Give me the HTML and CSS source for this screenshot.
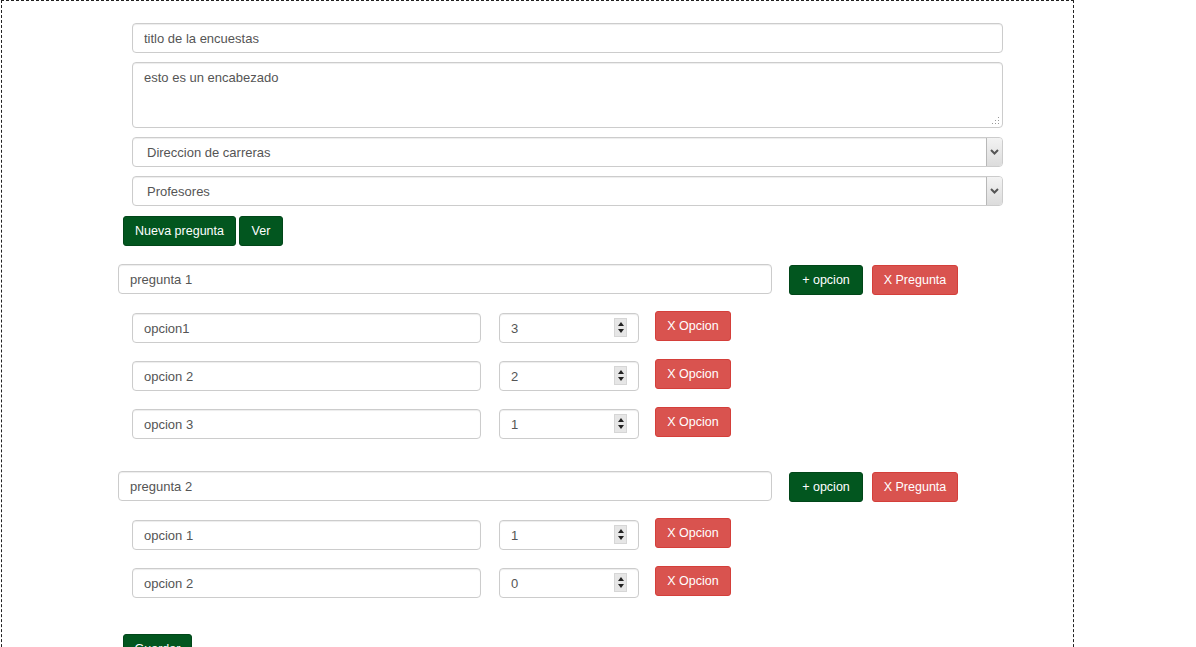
FILE: index.html
```html
<!DOCTYPE html>
<html lang="es">
<head>
    <meta charset="UTF-8">
    <meta name="viewport" content="width=device-width, initial-scale=1.0">
    <title>Encuesta</title>
    <link rel="stylesheet" href="styles.css">
</head>
<body>
    <div class="canvas">
        <form class="survey" onsubmit="return false">
            <div class="head-fields">
                <input class="field" type="text" value="titlo de la encuestas">

                <div class="area-wrap">
                    <textarea class="field area">esto es un encabezado</textarea>
                    <svg class="grip" width="9" height="9" viewBox="0 0 9 9">
                        <rect x="7" y="1" width="1" height="1"/>
                        <rect x="4" y="4" width="1" height="1"/><rect x="7" y="4" width="1" height="1"/>
                        <rect x="1" y="7" width="1" height="1"/><rect x="4" y="7" width="1" height="1"/><rect x="7" y="7" width="1" height="1"/>
                    </svg>
                </div>

                <div class="select-wrap">
                    <select class="field select">
                        <option>Direccion de carreras</option>
                    </select>
                    <span class="select-btn">
                        <svg width="9" height="6" viewBox="0 0 9 6"><path d="M1 1 L4.5 4.5 L8 1" fill="none" stroke="#555" stroke-width="2"/></svg>
                    </span>
                </div>

                <div class="select-wrap">
                    <select class="field select">
                        <option>Profesores</option>
                    </select>
                    <span class="select-btn">
                        <svg width="9" height="6" viewBox="0 0 9 6"><path d="M1 1 L4.5 4.5 L8 1" fill="none" stroke="#555" stroke-width="2"/></svg>
                    </span>
                </div>
            </div>

            <div class="toolbar">
                <button class="btn btn-green btn-new" type="button">Nueva pregunta</button>
                <button class="btn btn-green btn-ver" type="button">Ver</button>
            </div>

            <!-- pregunta 1 -->
            <div class="question">
                <div class="question-row">
                    <input class="field question-input" type="text" value="pregunta 1">
                    <button class="btn btn-green btn-add" type="button">+ opcion</button>
                    <button class="btn btn-red btn-del-q" type="button">X Pregunta</button>
                </div>
                <div class="options">
                    <div class="option-row">
                        <input class="field option-input" type="text" value="opcion1">
                        <div class="num-wrap">
                            <input class="field num" type="number" value="3">
                            <span class="spin"><i class="up"></i><i class="down"></i></span>
                        </div>
                        <button class="btn btn-red btn-del-o" type="button">X Opcion</button>
                    </div>
                    <div class="option-row">
                        <input class="field option-input" type="text" value="opcion 2">
                        <div class="num-wrap">
                            <input class="field num" type="number" value="2">
                            <span class="spin"><i class="up"></i><i class="down"></i></span>
                        </div>
                        <button class="btn btn-red btn-del-o" type="button">X Opcion</button>
                    </div>
                    <div class="option-row">
                        <input class="field option-input" type="text" value="opcion 3">
                        <div class="num-wrap">
                            <input class="field num" type="number" value="1">
                            <span class="spin"><i class="up"></i><i class="down"></i></span>
                        </div>
                        <button class="btn btn-red btn-del-o" type="button">X Opcion</button>
                    </div>
                </div>
            </div>

            <!-- pregunta 2 -->
            <div class="question">
                <div class="question-row">
                    <input class="field question-input" type="text" value="pregunta 2">
                    <button class="btn btn-green btn-add" type="button">+ opcion</button>
                    <button class="btn btn-red btn-del-q" type="button">X Pregunta</button>
                </div>
                <div class="options">
                    <div class="option-row">
                        <input class="field option-input" type="text" value="opcion 1">
                        <div class="num-wrap">
                            <input class="field num" type="number" value="1">
                            <span class="spin"><i class="up"></i><i class="down"></i></span>
                        </div>
                        <button class="btn btn-red btn-del-o" type="button">X Opcion</button>
                    </div>
                    <div class="option-row">
                        <input class="field option-input" type="text" value="opcion 2">
                        <div class="num-wrap">
                            <input class="field num" type="number" value="0">
                            <span class="spin"><i class="up"></i><i class="down"></i></span>
                        </div>
                        <button class="btn btn-red btn-del-o" type="button">X Opcion</button>
                    </div>
                </div>
            </div>

            <div class="footer">
                <button class="btn btn-green btn-save" type="submit">Guardar</button>
            </div>
        </form>
    </div>
</body>
</html>
```

FILE: styles.css
```css
body {
    margin: 0;
    font-family: "Liberation Sans", Arial, sans-serif;
    font-size: 13px;
    color: #555;
    background: #fff;
}

.canvas {
    width: 1071px;
    min-height: 720px;
    margin-left: 1px;
    border: 1px dashed #222;
}

.survey {
    padding-top: 22px;
}

/* inputs */
.field {
    box-sizing: border-box;
    height: 30px;
    padding: 0 11px;
    border: 1px solid #ccc;
    border-radius: 4px;
    box-shadow: inset 0 1px 1px rgba(0, 0, 0, 0.075);
    font-family: inherit;
    font-size: 13px;
    color: #555;
    background: #fff;
    outline: none;
}

.head-fields {
    display: flex;
    flex-direction: column;
    gap: 9px;
    margin-left: 130px;
    width: 871px;
}

.head-fields .field {
    width: 100%;
}

.area-wrap,
.select-wrap,
.num-wrap {
    position: relative;
}

.area {
    display: block;
    height: 66px;
    padding-top: 7px;
    resize: none;
    line-height: 16px;
}

.grip {
    position: absolute;
    right: 3px;
    bottom: 3px;
    fill: #999;
}

.select {
    display: block;
    appearance: none;
    -webkit-appearance: none;
    padding-left: 14px;
}

.select-btn {
    position: absolute;
    top: 1px;
    right: 1px;
    bottom: 1px;
    width: 16px;
    box-sizing: border-box;
    border-left: 1px solid #b8b8b8;
    border-radius: 0 3px 3px 0;
    background: linear-gradient(#f3f3f3, #dcdcdc);
    display: flex;
    align-items: center;
    justify-content: center;
    pointer-events: none;
}

/* buttons */
.btn {
    box-sizing: border-box;
    height: 30px;
    padding: 0;
    border: 1px solid transparent;
    border-radius: 3px;
    font-family: inherit;
    font-size: 12.5px;
    color: #fff;
    white-space: nowrap;
    text-align: center;
    cursor: pointer;
}

.btn-green {
    background: #02561f;
    border-color: #014619;
}

.btn-red {
    background: #d9534f;
    border-color: #d43f3a;
}

.toolbar {
    display: flex;
    gap: 3px;
    margin: 10px 0 0 121px;
}

.btn-new {
    width: 113px;
}

.btn-ver {
    width: 44px;
}

/* questions */
.question {
    margin: 18px 0 0 116px;
}

.question + .question {
    margin-top: 32px;
}

.question-row {
    display: flex;
    align-items: flex-start;
}

.question-input {
    width: 654px;
}

.btn-add {
    margin: 1px 0 0 17px;
    width: 74px;
}

.btn-del-q {
    margin: 1px 0 0 9px;
    width: 86px;
}

.options {
    display: flex;
    flex-direction: column;
    gap: 18px;
    margin: 18px 0 0 14px;
}

.option-row {
    display: flex;
    align-items: flex-start;
}

.option-input {
    width: 349px;
}

.num-wrap {
    margin-left: 18px;
}

.num {
    width: 140px;
    -moz-appearance: textfield;
}

.num::-webkit-inner-spin-button,
.num::-webkit-outer-spin-button {
    -webkit-appearance: none;
    margin: 0;
}

.spin {
    position: absolute;
    top: 5px;
    right: 12px;
    width: 13px;
    height: 19px;
    box-sizing: border-box;
    border: 1px solid #d6d6d6;
    background: #e6e6e6;
    display: flex;
    flex-direction: column;
    align-items: center;
    justify-content: center;
    gap: 3px;
}

.spin i {
    width: 0;
    height: 0;
    border-left: 3px solid transparent;
    border-right: 3px solid transparent;
}

.spin .up {
    border-bottom: 4px solid #222;
}

.spin .down {
    border-top: 4px solid #222;
}

.btn-del-o {
    margin: -2px 0 0 16px;
    width: 76px;
}

.footer {
    margin: 36px 0 0 121px;
}

.btn-save {
    width: 69px;
}
```
